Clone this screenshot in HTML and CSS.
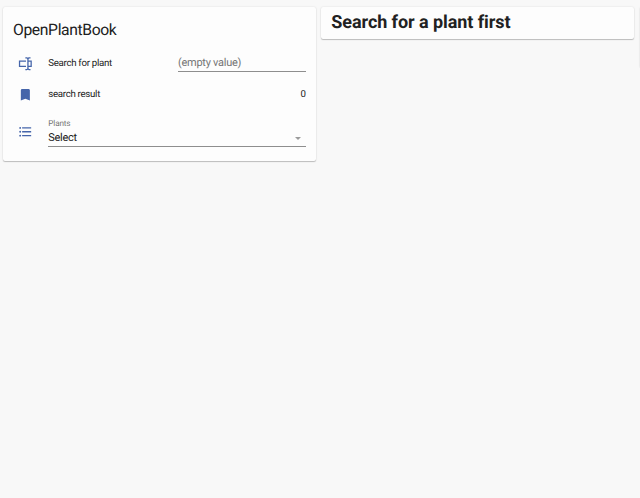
FILE: index.html
```html
<!DOCTYPE html>
<html lang="en">
<head>
<meta charset="utf-8">
<title>OpenPlantBook</title>
<link rel="stylesheet" href="styles.css">
</head>
<body>
<main class="board">
  <section class="card entities">
    <h1 class="title">OpenPlantBook</h1>
    <div class="row search">
      <svg class="icon" viewBox="0 0 24 24"><path d="M17,7H22V17H17V19A1,1 0 0,0 18,20H20V22H17.5C16.95,22 16,21.55 16,21C16,21.55 15.05,22 14.5,22H12V20H14A1,1 0 0,0 15,19V5A1,1 0 0,0 14,4H12V2H14.5C15.05,2 16,2.45 16,3C16,2.45 16.95,2 17.5,2H20V4H18A1,1 0 0,0 17,5V7M2,7H13V9H4V15H13V17H2V7M20,15V9H17V15H20Z"/></svg>
      <span class="name">Search for plant</span>
      <span class="field">(empty value)</span>
    </div>
    <div class="row result">
      <svg class="icon" viewBox="0 0 24 24"><path d="M17,3H7A2,2 0 0,0 5,5V21L12,18L19,21V5C19,3.89 18.1,3 17,3Z"/></svg>
      <span class="name">search result</span>
      <span class="value">0</span>
    </div>
    <div class="row plants">
      <svg class="icon" viewBox="0 0 24 24"><path d="M7,5H21V7H7V5M7,13V11H21V13H7M4,4.5A1.5,1.5 0 0,1 5.5,6A1.5,1.5 0 0,1 4,7.5A1.5,1.5 0 0,1 2.5,6A1.5,1.5 0 0,1 4,4.5M4,10.5A1.5,1.5 0 0,1 5.5,12A1.5,1.5 0 0,1 4,13.5A1.5,1.5 0 0,1 2.5,12A1.5,1.5 0 0,1 4,10.5M7,19V17H21V19H7M4,16.5A1.5,1.5 0 0,1 5.5,18A1.5,1.5 0 0,1 4,19.5A1.5,1.5 0 0,1 2.5,18A1.5,1.5 0 0,1 4,16.5Z"/></svg>
      <div class="select">
        <span class="label">Plants</span>
        <div class="choice"><span>Select</span><svg class="caret" viewBox="0 0 6 3"><path d="M0,0H6L3,3Z"/></svg></div>
      </div>
    </div>
  </section>
  <section class="card notice"><h2 class="heading">Search for a plant first</h2></section>
  <section class="card next"></section>
</main>
</body>
</html>
```
FILE: styles.css
```css
* { box-sizing: border-box; }
body {
  margin: 0;
  height: 498px;
  overflow: hidden;
  background: #f8f8f8;
  color: #212121;
  font-family: Roboto, "Liberation Sans", sans-serif;
  text-rendering: geometricPrecision;
}
.board {
  display: grid;
  grid-template-columns: 313px 313px 1fr;
  column-gap: 5.3px;
  align-items: start;
  padding: 7px 0 0 3px;
  overflow: hidden;
  height: 498px;
}
.card {
  background: #fdfdfd;
  border-radius: 2px;
  box-shadow: 0 1px 1px rgba(0, 0, 0, .22), 0 0 2px rgba(0, 0, 0, .12);
}
.entities { height: 154px; padding: 10px 10px 0; }
.title { margin: 0; font-size: 15.7px; font-weight: 400; line-height: 25px; padding-bottom: 1px; letter-spacing: -.37px; }
.row { display: flex; align-items: center; font-size: 9.7px; letter-spacing: -.3px; }
.icon { width: 15.5px; height: 15.5px; margin: 0 14.8px 0 5px; fill: #4565aa; flex: none; transform: translateX(-.4px); }
.name { flex: 1; }
.search { height: 30px; margin-top: 5px; }
.search .icon { margin-top: 2px; }
.field {
  width: 128px;
  height: 19px;
  margin-top: -1px;
  border-bottom: 1px solid #8e8e8e;
  color: #757575;
  font-size: 11px;
  line-height: 19px;
  letter-spacing: -.27px;
}
.result { height: 24px; margin-top: 4px; }
.result .icon { margin-top: 2px; }
.value { letter-spacing: 0; }
.plants { height: 38px; margin-top: 7px; }
.select {
  flex: 1;
  height: 28px;
  margin-top: 1px;
  border-bottom: 1px solid #8e8e8e;
}
.plants .icon { margin-top: 0; }
.label { display: block; color: #757575; font-size: 8.2px; line-height: 11px; letter-spacing: -.15px; }
.choice {
  display: flex;
  align-items: center;
  justify-content: space-between;
  font-size: 11px;
  line-height: 16px;
  letter-spacing: -.27px;
}
.caret { width: 6px; height: 3px; margin: 1px 5px 0 0; fill: #9b9b9b; }
.notice { height: 32px; padding: 0 10px; }
.heading { margin: 0; font-size: 18px; font-weight: 700; line-height: 31px; letter-spacing: -.07px; }
.next { height: 60px; }
```
